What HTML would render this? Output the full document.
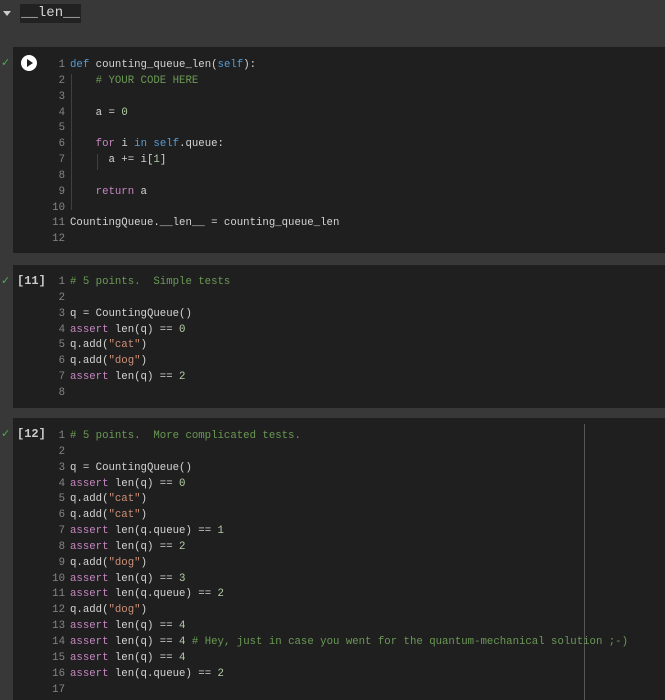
<!DOCTYPE html>
<html><head><meta charset="utf-8"><style>
body{margin:0;width:665px;height:700px;background:#383838;overflow:hidden;position:relative;font-family:"Liberation Mono",monospace;}
.title{position:absolute;left:20px;top:4px;width:61px;height:19px;background:#222;color:#d4d4d4;font-family:"Liberation Mono",monospace;font-size:14px;line-height:19px;text-align:center;}
.tri{position:absolute;left:3px;top:11px;width:0;height:0;border-left:4px solid transparent;border-right:4px solid transparent;border-top:5px solid #ccc;}
.cell{position:absolute;left:13px;right:0;background:#1f1f1f;}
pre{position:absolute;margin:0;font-family:"Liberation Mono",monospace;font-size:10.7px;line-height:15.85px;color:#d4d4d4;}
.ln{position:absolute;left:0;width:52px;text-align:right;color:#858585;margin:0;font-family:"Liberation Mono",monospace;font-size:10.7px;line-height:15.85px;}
.k{color:#569cd6}.p{color:#c586c0}.s{color:#ce9178}.c{color:#6a9955}.n{color:#b5cea8}
.cnt{position:absolute;left:17px;color:#ccc;font-family:"Liberation Mono",monospace;font-size:12px;font-weight:bold;}
.chk{position:absolute;left:1px;color:#4caf50;font-size:11px;font-family:"DejaVu Sans",sans-serif;}
.guide{position:absolute;width:1px;background:#404040;}
</style></head><body>
<div class="tri"></div>
<div class="title">__len__</div>

<div class="cell" style="top:47px;height:206px;">
  <div style="position:absolute;left:8px;top:8px;width:16px;height:16px;border-radius:50%;background:#fff;"></div>
  <div style="position:absolute;left:14px;top:12px;width:0;height:0;border-top:4px solid transparent;border-bottom:4px solid transparent;border-left:6px solid #1f1f1f;"></div>
  <div class="guide" style="left:58px;top:27px;height:136px;"></div>
  <div class="guide" style="left:84px;top:107px;height:16px;"></div>
  <pre class="ln" style="top:11px;">1
2
3
4
5
6
7
8
9
10
11
12</pre>
  <pre style="left:57px;top:11px;"><span class="k">def</span> counting_queue_len(<span class="k">self</span>):
    <span class="c"># YOUR CODE HERE</span>

    a = <span class="n">0</span>

    <span class="p">for</span> i <span class="k">in</span> <span class="k">self</span>.queue:
      a += i[<span class="n">1</span>]

    <span class="p">return</span> a

CountingQueue.__len__ = counting_queue_len
</pre>
</div>
<div class="chk" style="top:56px;">✓</div>

<div class="cell" style="top:265px;height:143px;">
  <div class="cnt" style="left:4px;top:9px;">[11]</div>
  <pre class="ln" style="top:10px;">1
2
3
4
5
6
7
8</pre>
  <pre style="left:57px;top:10px;"><span class="c"># 5 points.  Simple tests</span>

q = CountingQueue()
<span class="p">assert</span> len(q) == <span class="n">0</span>
q.add(<span class="s">"cat"</span>)
q.add(<span class="s">"dog"</span>)
<span class="p">assert</span> len(q) == <span class="n">2</span>
</pre>
</div>
<div class="chk" style="top:274px;">✓</div>

<div class="cell" style="top:418px;height:282px;">
  <div style="position:absolute;left:571px;top:6px;width:1px;height:276px;background:#555;"></div>
  <div class="cnt" style="left:4px;top:9px;">[12]</div>
  <pre class="ln" style="top:11px;">1
2
3
4
5
6
7
8
9
10
11
12
13
14
15
16
17</pre>
  <pre style="left:57px;top:11px;"><span class="c"># 5 points.  More complicated tests.</span>

q = CountingQueue()
<span class="p">assert</span> len(q) == <span class="n">0</span>
q.add(<span class="s">"cat"</span>)
q.add(<span class="s">"cat"</span>)
<span class="p">assert</span> len(q.queue) == <span class="n">1</span>
<span class="p">assert</span> len(q) == <span class="n">2</span>
q.add(<span class="s">"dog"</span>)
<span class="p">assert</span> len(q) == <span class="n">3</span>
<span class="p">assert</span> len(q.queue) == <span class="n">2</span>
q.add(<span class="s">"dog"</span>)
<span class="p">assert</span> len(q) == <span class="n">4</span>
<span class="p">assert</span> len(q) == <span class="n">4</span> <span class="c"># Hey, just in case you went for the quantum-mechanical solution ;-)</span>
<span class="p">assert</span> len(q) == <span class="n">4</span>
<span class="p">assert</span> len(q.queue) == <span class="n">2</span>
</pre>
</div>
<div class="chk" style="top:427px;">✓</div>
</body></html>
